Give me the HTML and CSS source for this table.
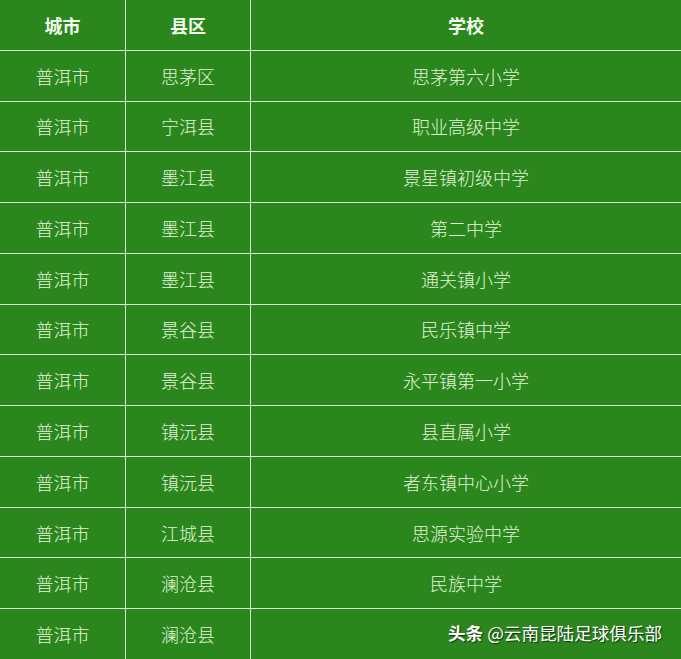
FILE: index.html
```html
<!DOCTYPE html>
<html lang="zh">
<head>
<meta charset="utf-8">
<link rel="stylesheet" href="styles.css">
</head>
<body>
<div class="frame">
  <div class="grid">
    <div class="cell head">城市</div><div class="cell head">县区</div><div class="cell head">学校</div>
    <div class="cell">普洱市</div><div class="cell">思茅区</div><div class="cell">思茅第六小学</div>
    <div class="cell">普洱市</div><div class="cell">宁洱县</div><div class="cell">职业高级中学</div>
    <div class="cell">普洱市</div><div class="cell">墨江县</div><div class="cell">景星镇初级中学</div>
    <div class="cell">普洱市</div><div class="cell">墨江县</div><div class="cell">第二中学</div>
    <div class="cell">普洱市</div><div class="cell">墨江县</div><div class="cell">通关镇小学</div>
    <div class="cell">普洱市</div><div class="cell">景谷县</div><div class="cell">民乐镇中学</div>
    <div class="cell">普洱市</div><div class="cell">景谷县</div><div class="cell">永平镇第一小学</div>
    <div class="cell">普洱市</div><div class="cell">镇沅县</div><div class="cell">县直属小学</div>
    <div class="cell">普洱市</div><div class="cell">镇沅县</div><div class="cell">者东镇中心小学</div>
    <div class="cell">普洱市</div><div class="cell">江城县</div><div class="cell">思源实验中学</div>
    <div class="cell">普洱市</div><div class="cell">澜沧县</div><div class="cell">民族中学</div>
    <div class="cell">普洱市</div><div class="cell">澜沧县</div><div class="cell"></div>
  </div>
  <div class="watermark"><span class="brand">头条</span> @云南昆陆足球俱乐部</div>
</div>
</body>
</html>
```
FILE: styles.css
```css
html, body {
  margin: 0;
  padding: 0;
  background: #2a861d;
}
.frame {
  position: relative;
  width: 681px;
  height: 659px;
  overflow: hidden;
}
.grid {
  display: grid;
  grid-template-columns: 125px 124px 1fr;
  grid-template-rows: repeat(13, 1fr);
  gap: 1px;
  height: 659px;
  background: #d9ecd2;
}
.cell {
  background: #2a861d;
  color: #e2f5d8;
  font-family: "Noto Sans CJK SC", "Noto Sans", sans-serif;
  font-size: 18px;
  font-weight: 300;
  display: flex;
  align-items: center;
  justify-content: center;
  line-height: 1;
}
.head {
  font-weight: bold;
  color: #f2fbee;
}
.watermark {
  position: absolute;
  left: 448px;
  top: 621px;
  font-family: "Noto Sans CJK SC", sans-serif;
  font-size: 17.6px;
  line-height: 24px;
  color: #ffffff;
  text-shadow: 1px 1px 1px rgba(0,0,0,0.6);
  white-space: nowrap;
}
.brand {
  font-weight: bold;
}
```
